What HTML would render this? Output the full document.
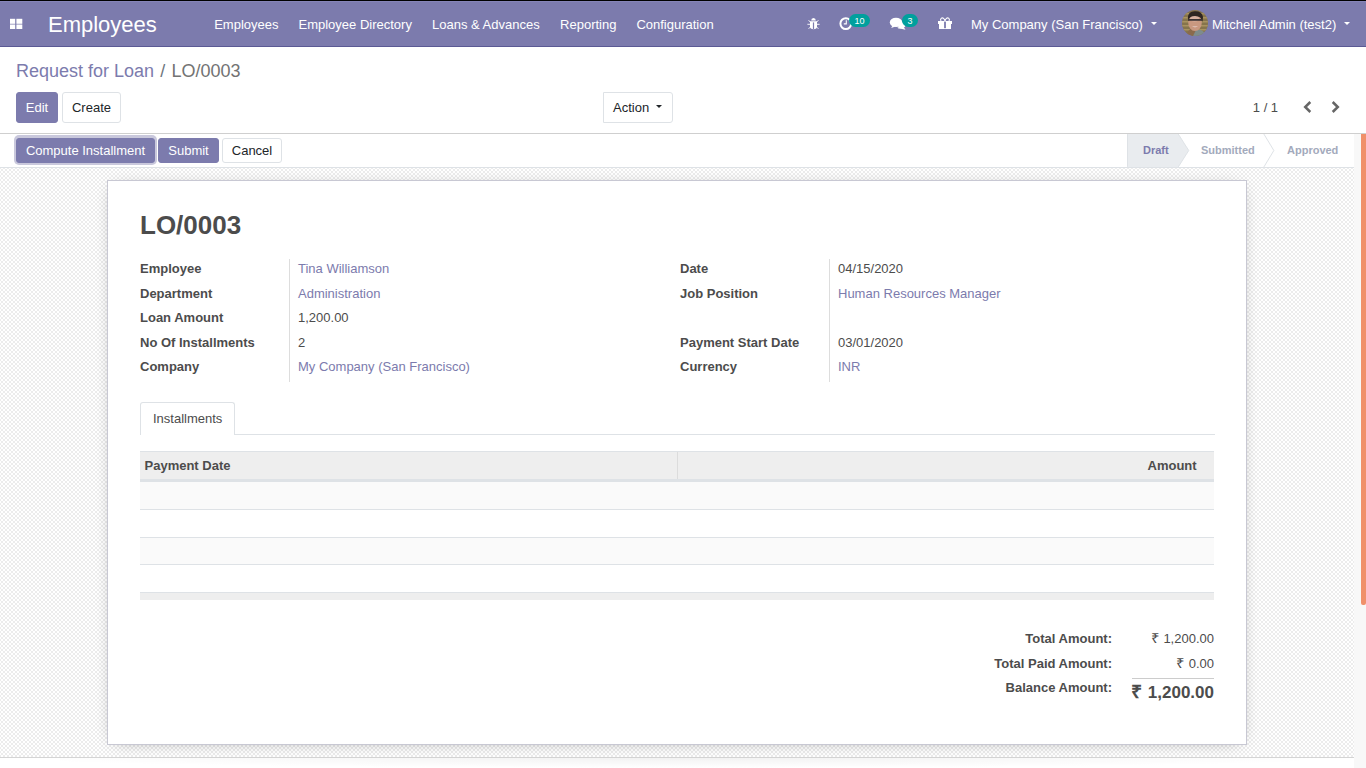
<!DOCTYPE html>
<html><head><meta charset="utf-8">
<style>
*{box-sizing:border-box;margin:0;padding:0}
html,body{width:1366px;height:768px;overflow:hidden;background:#fff;font-family:"Liberation Sans",sans-serif;font-size:13px;color:#4c4c4c}
.a{position:absolute;white-space:nowrap}
#nav{position:absolute;left:0;top:0;width:1366px;height:47px;background:#7c7bad;border-top:1px solid #000;border-bottom:1px solid #5b5a94}
#nav .hl{position:absolute;left:0;top:0;width:1366px;height:1px;background:#8584b8}
.nt{color:#fff;font-size:13px;line-height:16px}
.badge{position:absolute;background:#00a09d;color:#fff;font-size:9px;line-height:14.5px;height:13px;border-radius:7px;text-align:center}
.caret{position:absolute;width:0;height:0;border-left:3px solid transparent;border-right:3px solid transparent;border-top:3.5px solid #fff}
#cp{position:absolute;left:0;top:47px;width:1366px;height:87px;background:#fff;border-bottom:1px solid #cfcfcf}
.btn{position:absolute;height:31px;border:1px solid #dee2e6;border-radius:3px;background:#fff;color:#212529;font-size:13px;line-height:29px;text-align:center}
#sb{position:absolute;left:0;top:134px;width:1354px;height:34px;background:#fff;border-bottom:1px solid #dee2e6}
.bsm{position:absolute;top:4px;height:25px;border-radius:3px;font-size:13px;line-height:23px;text-align:center;border:1px solid #dee2e6;background:#fff;color:#212529}
#bg{position:absolute;left:0;top:168px;width:1354px;height:590px;border-bottom:1px solid #d4d4d4;
 background-color:#fff;
 background-image:repeating-conic-gradient(#ececec 0 25%,#fff 0 50%);
 background-size:4px 4px;background-position:3px 1px}
#sheet{position:absolute;left:107px;top:12px;width:1140px;height:565px;background:#fff;border:1px solid #c8c8d3;box-shadow:0 2px 16px -8px rgba(0,0,0,.45)}
.lbl{position:absolute;font-weight:bold;color:#4c4c4c;font-size:13px;line-height:16px}
.val{position:absolute;color:#4c4c4c;font-size:13px;line-height:16px}
.lnk{color:#7c7bad}
.vsep{position:absolute;width:1px;background:#ddd}
#scroll{position:absolute;left:1354px;top:134px;width:12px;height:634px;background:#f8f8f8}
#thumb{position:absolute;left:7px;top:0;width:5px;height:471px;background:#f0906a;border-radius:0 0 2px 2px}
.bp{background:#7c7bad;border-color:#7c7bad;color:#fff}
.rs{display:inline-block;transform:translateX(-0.8px) scale(1.15,1.06);transform-origin:100% 80%}
</style></head><body>
<div id="nav"><div class="hl"></div>
<svg class="a" style="left:10px;top:17px" width="13" height="12" viewBox="0 0 13 12"><rect x="0" y="0.8" width="5.2" height="5" fill="#fff"/><rect x="6.4" y="0.8" width="5.9" height="5" fill="#fff"/><rect x="0" y="6.5" width="5.2" height="4.5" fill="#fff"/><rect x="6.4" y="6.5" width="5.9" height="4.5" fill="#fff"/></svg>
<div class="a" style="left:48px;top:9px;font-size:22px;line-height:30px;color:#fff">Employees</div>
<div class="a nt" style="left:214.2px;top:16px">Employees</div>
<div class="a nt" style="left:298.5px;top:16px">Employee Directory</div>
<div class="a nt" style="left:432px;top:16px">Loans &amp; Advances</div>
<div class="a nt" style="left:560.1px;top:16px">Reporting</div>
<div class="a nt" style="left:636.4px;top:16px">Configuration</div>
<svg class="a" style="left:800px;top:9px" width="160" height="26" viewBox="800 10 160 26">
<path d="M811.2 20.6 A2.3 2.6 0 0 1 815.8 20.6 Z" fill="#fff"/>
<path d="M810 21.2 H817 V26.5 Q817 29.2 813.5 29.2 Q810 29.2 810 26.5 Z" fill="#fff"/>
<rect x="812.9" y="22.4" width="1.2" height="6.8" fill="#7c7bad"/>
<path d="M808.6 20.2 L810.4 22.2 M807.4 24.3 H810.2 M808.6 28.8 L810.4 27 M818.4 20.2 L816.6 22.2 M819.6 24.3 H816.8 M818.4 28.8 L816.6 27" stroke="#fff" stroke-width="0.9" fill="none"/>
<circle cx="845.8" cy="23.6" r="5.4" fill="none" stroke="#fff" stroke-width="2"/>
<path d="M846.3 20.3 V23.9 H843.8" fill="none" stroke="#fff" stroke-width="1.1"/>
<ellipse cx="896" cy="22.4" rx="6.2" ry="4.7" fill="#fff"/>
<path d="M892.5 25.5 L891.2 28 L895.5 26.6 Z" fill="#fff"/>
<path d="M897 27.6 Q901 28.2 903 26 L905.5 29.8 L901 28.8 Q898.5 29 897 27.6 Z" fill="#fff"/>
<path d="M900 21.5 Q906 22.5 905.2 26.5 L904 27.5 Q902 28.6 898 27.8 Z" fill="#fff"/>
<path d="M941 21 C939.6 18.6 942 17.4 943.4 18.2 C944.4 18.8 945 21 945 21 C945 21 945.6 18.8 946.6 18.2 C948 17.4 950.4 18.6 949 21" fill="none" stroke="#fff" stroke-width="1.1"/>
<rect x="938" y="21" width="14" height="3" fill="#fff"/>
<rect x="939" y="24" width="12" height="5" fill="#fff"/>
<rect x="944.1" y="21.6" width="1.8" height="6.6" fill="#7c7bad"/>
</svg>
<div class="badge" style="left:849px;top:13px;width:21px">10</div>
<div class="badge" style="left:902px;top:13px;width:16px">3</div>
<div class="a nt" style="left:971px;top:16px">My Company (San Francisco)</div>
<div class="caret" style="left:1150.5px;top:21px"></div>
<svg class="a" style="left:1182px;top:9px" width="26" height="26" viewBox="0 0 26 26">
<defs><clipPath id="cc"><circle cx="13" cy="13" r="13"/></clipPath></defs>
<g clip-path="url(#cc)">
<rect width="26" height="26" fill="#86744c"/>
<rect y="3" width="26" height="1.5" fill="#a89260"/><rect y="7" width="26" height="1.5" fill="#a89260"/><rect y="11" width="26" height="1.5" fill="#a89260"/><rect y="15" width="26" height="1.5" fill="#a89260"/><rect y="19" width="26" height="1.5" fill="#a89260"/>
<path d="M5 26 Q6 19 10 18 L14 20 L12 26 Z" fill="#8a6a4c"/>
<path d="M11 26 L14 20 Q19 19 22 22 L22 26 Z" fill="#7e8c8c"/>
<ellipse cx="13" cy="12.5" rx="6.8" ry="8.6" fill="#c99880"/>
<ellipse cx="12.5" cy="8.5" rx="4.5" ry="3" fill="#d8b2a2"/>
<path d="M5.8 8 Q6 1 13 1.2 Q20 1 21 7 L20.5 12 Q19.5 6 13 6 Q7.5 6 6.8 10 Z" fill="#2e2622"/>
<rect x="6" y="9" width="14" height="1.8" fill="#3c3434"/>
<path d="M10 16 Q13 18.5 16 16 Q13 17 10 16 Z" fill="#f0e0e0"/>

</g></svg>
<div class="a nt" style="left:1212px;top:16px">Mitchell Admin (test2)</div>
<div class="caret" style="left:1344px;top:21px"></div>
</div>
<div id="cp">
<div class="a" style="left:16px;top:12px;font-size:18px;line-height:24px;color:#7c7bad">Request for Loan</div>
<div class="a" style="left:160.2px;top:12px;font-size:18px;line-height:24px;color:#6c757d">/</div>
<div class="a" style="left:171.5px;top:12px;font-size:18px;line-height:24px;color:#737373">LO/0003</div>
<div class="btn bp" style="left:16px;top:45px;width:42px">Edit</div>
<div class="btn" style="left:62px;top:45px;width:59px">Create</div>
<div class="btn" style="left:603px;top:45px;width:70px;text-align:left;padding-left:9px;border-radius:0 3px 3px 0">Action</div>
<div class="caret" style="left:656px;top:58px;border-top-color:#212529"></div>
<div class="a" style="left:1252.8px;top:53px;font-size:13px;line-height:16px;color:#4c4c4c">1 / 1</div>
<svg class="a" style="left:1302px;top:53px" width="11" height="14" viewBox="0 0 11 14"><path d="M8.3 2 L3.2 7 L8.3 12" fill="none" stroke="#666" stroke-width="2.5"/></svg>
<svg class="a" style="left:1329.5px;top:53px" width="11" height="14" viewBox="0 0 11 14"><path d="M2.7 2 L7.8 7 L2.7 12" fill="none" stroke="#666" stroke-width="2.5"/></svg>
</div>
<div id="sb">
<div class="a" style="left:14px;top:1px;width:143px;height:30px;border-radius:5px;background:#c9c8dc"></div>
<div class="bsm bp" style="left:16px;width:139px;top:4px">Compute Installment</div>
<div class="bsm bp" style="left:158px;width:61px">Submit</div>
<div class="bsm" style="left:222px;width:60px">Cancel</div>
<svg class="a" style="left:1127px;top:0" width="227" height="33" viewBox="0 0 228 33">
<path d="M1 0 H51.5 L62 16.5 L51.5 33 H1 Z" fill="#e9ecef"/>
<line x1="0.5" y1="0" x2="0.5" y2="33" stroke="#dee2e6"/>
<path d="M51.5 0 L62 16.5 L51.5 33" fill="none" stroke="#dee2e6" stroke-width="1"/>
<path d="M137.5 0 L147.5 16.5 L137.5 33" fill="none" stroke="#dee2e6" stroke-width="1"/>
</svg>
<div class="a" style="left:1143px;top:8px;font-size:11px;line-height:16px;font-weight:bold;color:#7c7bad">Draft</div>
<div class="a" style="left:1201px;top:8px;font-size:11px;line-height:16px;font-weight:bold;color:#a3aabc">Submitted</div>
<div class="a" style="left:1287px;top:8px;font-size:11px;line-height:16px;font-weight:bold;color:#a3aabc">Approved</div>
</div>
<div id="bg"><div id="sheet">
<div class="a" style="left:32px;top:28px;font-size:26px;line-height:32px;font-weight:bold;color:#4c4c4c">LO/0003</div>
<div class="lbl" style="left:32px;top:80px">Employee</div>
<div class="lbl" style="left:32px;top:105px">Department</div>
<div class="lbl" style="left:32px;top:129px">Loan Amount</div>
<div class="lbl" style="left:32px;top:154px">No Of Installments</div>
<div class="lbl" style="left:32px;top:178px">Company</div>
<div class="vsep" style="left:181px;top:78px;height:123px"></div>
<div class="val lnk" style="left:190px;top:80px">Tina Williamson</div>
<div class="val lnk" style="left:190px;top:105px">Administration</div>
<div class="val" style="left:190px;top:129px">1,200.00</div>
<div class="val" style="left:190px;top:154px">2</div>
<div class="val lnk" style="left:190px;top:178px">My Company (San Francisco)</div>
<div class="lbl" style="left:572px;top:80px">Date</div>
<div class="lbl" style="left:572px;top:105px">Job Position</div>
<div class="lbl" style="left:572px;top:154px">Payment Start Date</div>
<div class="lbl" style="left:572px;top:178px">Currency</div>
<div class="vsep" style="left:721px;top:78px;height:123px"></div>
<div class="val" style="left:730px;top:80px">04/15/2020</div>
<div class="val lnk" style="left:730px;top:105px">Human Resources Manager</div>
<div class="val" style="left:730px;top:154px">03/01/2020</div>
<div class="val lnk" style="left:730px;top:178px">INR</div>
<div class="a" style="left:32px;top:253px;width:1075px;height:1px;background:#dee2e6"></div>
<div class="a" style="left:32px;top:221px;width:95px;height:33px;background:#fff;border:1px solid #dee2e6;border-bottom:none;border-radius:3px 3px 0 0"></div>
<div class="val" style="left:45px;top:230px;color:#4c4c4c">Installments</div>
<div class="a" style="left:32px;top:270px;width:1074px;height:31px;background:#eee;border-top:1px solid #dee2e6;border-bottom:3px solid #dee2e6"></div>
<div class="a" style="left:569px;top:271px;width:1px;height:27px;background:#dcdcdc"></div>
<div class="lbl" style="left:36.5px;top:277px">Payment Date</div>
<div class="lbl" style="left:1039.5px;top:277px">Amount</div>
<div class="a" style="left:32px;top:301px;width:1074px;height:28px;background:#fafafa;border-bottom:1px solid #dee2e6"></div>
<div class="a" style="left:32px;top:329px;width:1074px;height:28px;background:#fff;border-bottom:1px solid #dee2e6"></div>
<div class="a" style="left:32px;top:357px;width:1074px;height:27px;background:#fafafa;border-bottom:1px solid #dee2e6"></div>
<div class="a" style="left:32px;top:384px;width:1074px;height:28px;background:#fff;border-bottom:1px solid #dee2e6"></div>
<div class="a" style="left:32px;top:412px;width:1074px;height:7px;background:#eee"></div>
<div class="lbl" style="right:134px;top:450px">Total Amount:</div>
<div class="val" style="right:32px;top:450px"><span class="rs">₹</span> 1,200.00</div>
<div class="lbl" style="right:134px;top:475px">Total Paid Amount:</div>
<div class="val" style="right:32px;top:475px"><span class="rs">₹</span> 0.00</div>
<div class="a" style="left:1024px;top:497px;width:82px;height:1px;background:#ccc"></div>
<div class="lbl" style="right:134px;top:499px">Balance Amount:</div>
<div class="a" style="right:32px;top:502px;font-size:17px;line-height:20px;font-weight:bold;color:#4c4c4c"><span class="rs">₹</span> 1,200.00</div>
</div></div>
<div class="a" style="left:60px;top:758px;width:1240px;height:10px;background:radial-gradient(ellipse 55% 100% at 50% 0,rgba(0,0,0,.05),rgba(0,0,0,0))"></div>
<div id="scroll"><div id="thumb"></div></div>
</body></html>
